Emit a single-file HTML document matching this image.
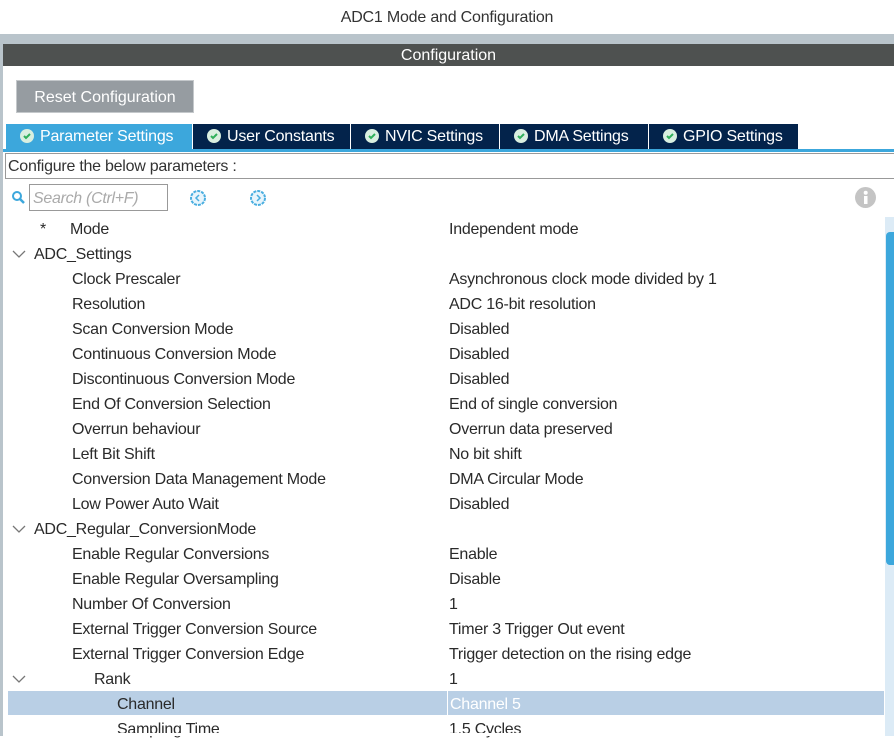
<!DOCTYPE html>
<html><head><style>
*{margin:0;padding:0;box-sizing:border-box}
body{width:894px;height:736px;overflow:hidden;background:#fff;font-family:"Liberation Sans",sans-serif;color:#2a2a2a;position:relative}
.a{position:absolute;white-space:nowrap}
.tab{position:absolute;top:124px;height:25px;background:#03234b;color:#fff;font-size:16px;line-height:25px;padding-left:14px;letter-spacing:-0.2px}
.tab svg{vertical-align:-2px;margin-right:6px}
.r{position:absolute;font-size:16px;line-height:25px;height:25px;white-space:nowrap;letter-spacing:-0.25px}
.c{position:absolute;left:12px;width:14px;height:10px}
</style></head><body>
<div class="a" style="left:0;top:0;width:3px;height:736px;background:#b9c4cb"></div>
<div class="a" style="left:0;top:0;width:894px;height:34px;background:#fff;text-align:center;font-size:16px;line-height:36px;color:#333;letter-spacing:-0.2px">ADC1 Mode and Configuration</div>
<div class="a" style="left:0;top:34px;width:894px;height:10px;background:#b9c4cb"></div>
<div class="a" style="left:3px;top:44px;width:891px;height:22px;background:#4e5150;color:#fff;text-align:center;font-size:16px;line-height:24px">Configuration</div>
<div class="a" style="left:16px;top:80px;width:178px;height:33px;background:#969ca1;border:1px solid #c4c8cb;color:#fff;font-size:16px;line-height:33px;text-align:center">Reset Configuration</div>

<div class="tab" style="left:6px;width:186px;background:#3ca7dc"><svg width="14" height="14" viewBox="0 0 14 14"><circle cx="7" cy="7" r="7" fill="#d9efe0"/><path d="M4 7l2 2 4-4" stroke="#2fb05a" stroke-width="2" fill="none"/></svg>Parameter Settings</div>
<div class="tab" style="left:193px;width:157px"><svg width="14" height="14" viewBox="0 0 14 14"><circle cx="7" cy="7" r="7" fill="#d9efe0"/><path d="M4 7l2 2 4-4" stroke="#2fb05a" stroke-width="2" fill="none"/></svg>User Constants</div>
<div class="tab" style="left:351px;width:148px"><svg width="14" height="14" viewBox="0 0 14 14"><circle cx="7" cy="7" r="7" fill="#d9efe0"/><path d="M4 7l2 2 4-4" stroke="#2fb05a" stroke-width="2" fill="none"/></svg>NVIC Settings</div>
<div class="tab" style="left:500px;width:148px"><svg width="14" height="14" viewBox="0 0 14 14"><circle cx="7" cy="7" r="7" fill="#d9efe0"/><path d="M4 7l2 2 4-4" stroke="#2fb05a" stroke-width="2" fill="none"/></svg>DMA Settings</div>
<div class="tab" style="left:649px;width:149px"><svg width="14" height="14" viewBox="0 0 14 14"><circle cx="7" cy="7" r="7" fill="#d9efe0"/><path d="M4 7l2 2 4-4" stroke="#2fb05a" stroke-width="2" fill="none"/></svg>GPIO Settings</div>
<div class="a" style="left:3px;top:149px;width:891px;height:3px;background:#3ca7dc"></div>
<div class="a" style="left:5px;top:153px;width:889px;height:26px;border:1px solid #999;border-right:none;font-size:16px;line-height:26px;padding-left:2px;color:#333;letter-spacing:-0.25px">Configure the below parameters :</div>

<svg class="a" style="left:11px;top:190px" width="16" height="16" viewBox="0 0 16 16"><circle cx="6" cy="6" r="4" stroke="#3ca7dc" stroke-width="2" fill="none"/><path d="M9 9l4 4" stroke="#3ca7dc" stroke-width="2.5"/></svg>
<div class="a" style="left:29px;top:184px;width:139px;height:27px;border:1px solid #999;font-size:16px;font-style:italic;color:#aaa;line-height:27px;padding-left:3px;letter-spacing:-0.3px">Search (Ctrl+F)</div>
<svg class="a" style="left:189px;top:189px" width="18" height="18" viewBox="0 0 18 18"><circle cx="9" cy="9" r="7" stroke="#4aaee0" stroke-width="2" fill="#e8f5fc" stroke-dasharray="3 1"/><path d="M10 6l-3 3 3 3" stroke="#4aaee0" stroke-width="1.5" fill="none"/></svg>
<svg class="a" style="left:249px;top:189px" width="18" height="18" viewBox="0 0 18 18"><circle cx="9" cy="9" r="7" stroke="#4aaee0" stroke-width="2" fill="#e8f5fc" stroke-dasharray="3 1"/><path d="M8 6l3 3-3 3" stroke="#4aaee0" stroke-width="1.5" fill="none"/></svg>
<svg class="a" style="left:855px;top:187px" width="21" height="21" viewBox="0 0 21 21"><circle cx="10.5" cy="10.5" r="10.5" fill="#c4c4c4"/><rect x="9" y="9" width="3.5" height="8" fill="#fff"/><circle cx="10.7" cy="5.8" r="2" fill="#fff"/></svg>

<div class="a" style="left:885px;top:217px;width:9px;height:519px;background:#dcebf6"></div>
<div class="a" style="left:886px;top:232px;width:8px;height:333px;background:#3ca7dc;border-radius:4px 0 0 4px"></div>

<div class="a" style="left:8px;top:691px;width:876px;height:24px;background:#b9cfe5"></div>
<div class="a" style="left:447px;top:691px;width:1px;height:24px;background:#fff"></div>

<div class="r" style="left:40px;top:217px">*</div><div class="r" style="left:70px;top:217px">Mode</div><div class="r" style="left:449px;top:217px">Independent mode</div>
<svg class="c" style="top:249px" viewBox="0 0 14 10"><path d="M1 2l6 6 6-6" stroke="#777" stroke-width="1.3" fill="none"/></svg><div class="r" style="left:34px;top:242px">ADC_Settings</div>
<div class="r" style="left:72px;top:267px">Clock Prescaler</div><div class="r" style="left:449px;top:267px">Asynchronous clock mode divided by 1</div>
<div class="r" style="left:72px;top:292px">Resolution</div><div class="r" style="left:449px;top:292px">ADC 16-bit resolution</div>
<div class="r" style="left:72px;top:317px">Scan Conversion Mode</div><div class="r" style="left:449px;top:317px">Disabled</div>
<div class="r" style="left:72px;top:342px">Continuous Conversion Mode</div><div class="r" style="left:449px;top:342px">Disabled</div>
<div class="r" style="left:72px;top:367px">Discontinuous Conversion Mode</div><div class="r" style="left:449px;top:367px">Disabled</div>
<div class="r" style="left:72px;top:392px">End Of Conversion Selection</div><div class="r" style="left:449px;top:392px">End of single conversion</div>
<div class="r" style="left:72px;top:417px">Overrun behaviour</div><div class="r" style="left:449px;top:417px">Overrun data preserved</div>
<div class="r" style="left:72px;top:442px">Left Bit Shift</div><div class="r" style="left:449px;top:442px">No bit shift</div>
<div class="r" style="left:72px;top:467px">Conversion Data Management Mode</div><div class="r" style="left:449px;top:467px">DMA Circular Mode</div>
<div class="r" style="left:72px;top:492px">Low Power Auto Wait</div><div class="r" style="left:449px;top:492px">Disabled</div>
<svg class="c" style="top:524px" viewBox="0 0 14 10"><path d="M1 2l6 6 6-6" stroke="#777" stroke-width="1.3" fill="none"/></svg><div class="r" style="left:34px;top:517px">ADC_Regular_ConversionMode</div>
<div class="r" style="left:72px;top:542px">Enable Regular Conversions</div><div class="r" style="left:449px;top:542px">Enable</div>
<div class="r" style="left:72px;top:567px">Enable Regular Oversampling</div><div class="r" style="left:449px;top:567px">Disable</div>
<div class="r" style="left:72px;top:592px">Number Of Conversion</div><div class="r" style="left:449px;top:592px">1</div>
<div class="r" style="left:72px;top:617px">External Trigger Conversion Source</div><div class="r" style="left:449px;top:617px">Timer 3 Trigger Out event</div>
<div class="r" style="left:72px;top:642px">External Trigger Conversion Edge</div><div class="r" style="left:449px;top:642px">Trigger detection on the rising edge</div>
<svg class="c" style="top:674px" viewBox="0 0 14 10"><path d="M1 2l6 6 6-6" stroke="#777" stroke-width="1.3" fill="none"/></svg><div class="r" style="left:94px;top:667px">Rank</div><div class="r" style="left:449px;top:667px">1</div>
<div class="r" style="left:117px;top:692px">Channel</div><div class="r" style="left:450px;top:692px;color:#fff">Channel 5</div>
<div class="r" style="left:117px;top:717px">Sampling Time</div><div class="r" style="left:449px;top:717px">1.5 Cycles</div>
<div class="a" style="left:0;top:733px;width:885px;height:3px;background:#fff"></div>
<div class="a" style="left:0;top:733px;width:3px;height:3px;background:#b9c4cb"></div>
</body></html>
